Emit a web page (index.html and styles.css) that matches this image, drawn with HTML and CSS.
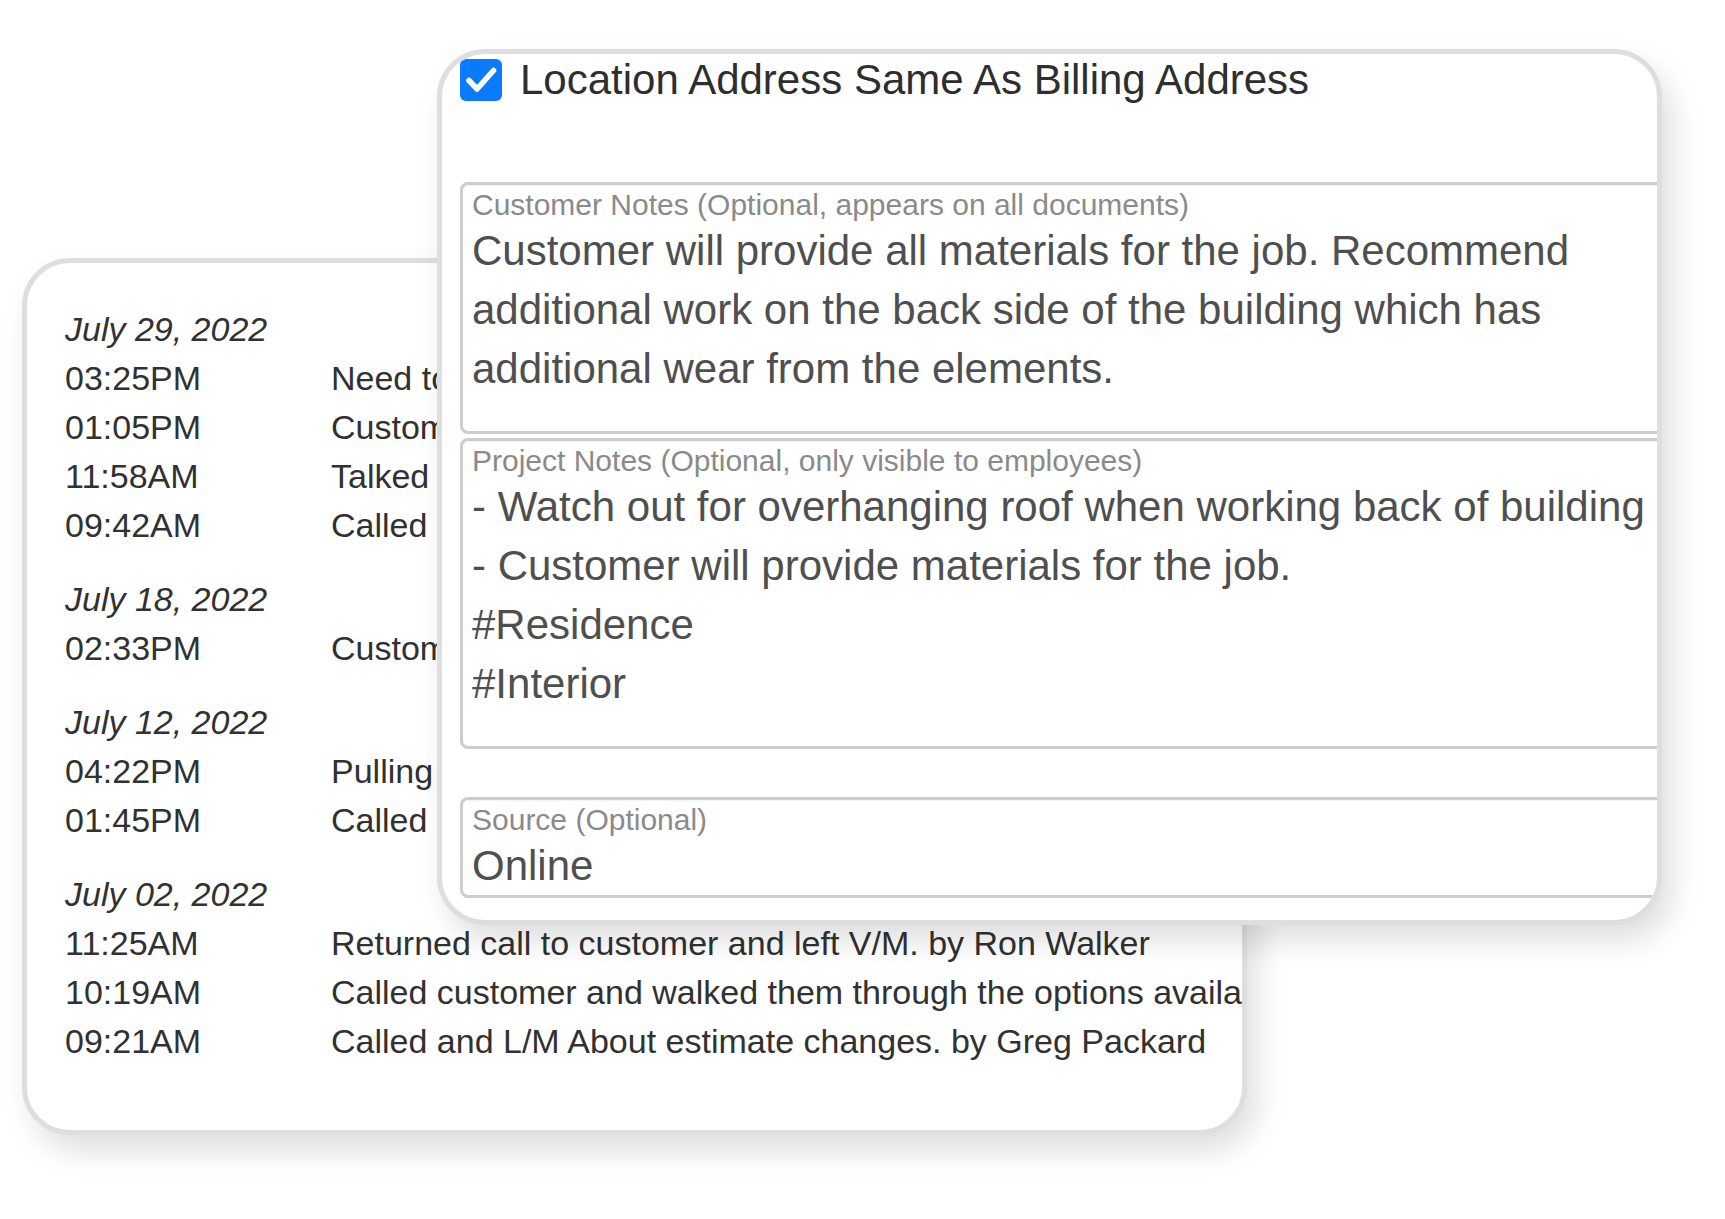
FILE: index.html
```html
<!DOCTYPE html>
<html lang="en">
<head>
<meta charset="utf-8">
<title>Customer Notes</title>
<link rel="stylesheet" href="styles.css">
</head>
<body>
<div class="stage">
  <section class="card log">
    <div class="group">
      <div class="date">July 29, 2022</div>
      <div class="row"><span class="time">03:25PM</span><span class="desc">Need to schedule a follow up visit with the customer. by Ron Walker</span></div>
      <div class="row"><span class="time">01:05PM</span><span class="desc">Customer asked for an updated estimate. by Greg Packard</span></div>
      <div class="row"><span class="time">11:58AM</span><span class="desc">Talked with customer about the start date. by Ron Walker</span></div>
      <div class="row"><span class="time">09:42AM</span><span class="desc">Called customer and left V/M. by Greg Packard</span></div>
    </div>
    <div class="group">
      <div class="date">July 18, 2022</div>
      <div class="row"><span class="time">02:33PM</span><span class="desc">Customer approved the color selections. by Ron Walker</span></div>
    </div>
    <div class="group">
      <div class="date">July 12, 2022</div>
      <div class="row"><span class="time">04:22PM</span><span class="desc">Pulling permits for the job. by Greg Packard</span></div>
      <div class="row"><span class="time">01:45PM</span><span class="desc">Called customer to confirm measurements. by Ron Walker</span></div>
    </div>
    <div class="group">
      <div class="date">July 02, 2022</div>
      <div class="row"><span class="time">11:25AM</span><span class="desc">Returned call to customer and left V/M. by Ron Walker</span></div>
      <div class="row"><span class="time">10:19AM</span><span class="desc">Called customer and walked them through the options available. by Greg Packard</span></div>
      <div class="row"><span class="time">09:21AM</span><span class="desc">Called and L/M About estimate changes. by Greg Packard</span></div>
    </div>
  </section>

  <section class="card form">
    <label class="check-row">
      <span class="checkbox">
        <svg viewBox="0 0 42 42" width="42" height="42" aria-hidden="true">
          <path d="M9 21.5 L17 30 L33.5 11.5" fill="none" stroke="#ffffff" stroke-width="5.6" stroke-linecap="round" stroke-linejoin="round"/>
        </svg>
      </span>
      <span class="check-label">Location Address Same As Billing Address</span>
    </label>

    <div class="field customer">
      <div class="field-label">Customer Notes (Optional, appears on all documents)</div>
      <div class="field-value">
        <div class="line">Customer will provide all materials for the job. Recommend</div>
        <div class="line">additional work on the back side of the building which has</div>
        <div class="line">additional wear from the elements.</div>
      </div>
    </div>

    <div class="field project">
      <div class="field-label">Project Notes (Optional, only visible to employees)</div>
      <div class="field-value">
        <div class="line">- Watch out for overhanging roof when working back of building</div>
        <div class="line">- Customer will provide materials for the job.</div>
        <div class="line">#Residence</div>
        <div class="line">#Interior</div>
      </div>
    </div>

    <div class="field source">
      <div class="field-label">Source (Optional)</div>
      <div class="field-value">
        <div class="line">Online</div>
      </div>
    </div>
  </section>
</div>
</body>
</html>
```

FILE: styles.css
```css
* {
  box-sizing: border-box;
}

html, body {
  margin: 0;
  padding: 0;
  background: #ffffff;
}

body {
  font-family: "Liberation Sans", Arial, Helvetica, sans-serif;
  width: 1725px;
  height: 1219px;
  overflow: hidden;
}

.stage {
  display: grid;
  grid-template-columns: 1fr;
  grid-template-rows: auto;
}

.card {
  grid-area: 1 / 1;
  width: 1225px;
  background: #ffffff;
  border: 5px solid #dedede;
  border-radius: 48px;
  overflow: hidden;
  box-shadow: 10px 16px 30px rgba(0, 0, 0, 0.13);
}

/* ---------- activity log card (behind) ---------- */
.log {
  margin: 258px 0 0 22px;
  height: 877px;
  padding: 42px 0 0 38px;
  z-index: 1;
  color: #313131;
  font-size: 34px;
  line-height: 49px;
}

.group + .group {
  margin-top: 25px;
}

.date {
  font-style: italic;
}

.row {
  display: flex;
  white-space: nowrap;
}

.time {
  flex: 0 0 266px;
}

.desc {
  flex: 0 0 auto;
}

/* ---------- form card (front) ---------- */
.form {
  margin: 49px 0 0 437px;
  height: 876px;
  padding: 5px 0 0 18px;
  z-index: 2;
}

.check-row {
  display: flex;
  align-items: flex-start;
  gap: 18px;
  height: 42px;
}

.checkbox {
  flex: 0 0 42px;
  width: 42px;
  height: 42px;
  border-radius: 6px;
  background: #0a7bff;
  display: block;
}

.checkbox svg {
  display: block;
}

.check-label {
  font-size: 42px;
  line-height: 42px;
  color: #2e2e2e;
  white-space: nowrap;
}

.field {
  margin-right: -60px;
  border: 3px solid #cdcdcd;
  border-radius: 8px;
  padding: 4px 0 33px 9px;
  box-shadow: inset 0 1px 2px rgba(0, 0, 0, 0.06);
  white-space: nowrap;
}

.customer {
  margin-top: 81px;
}

.project {
  margin-top: 4px;
}

.source {
  margin-top: 48px;
  padding-bottom: 0;
}

.field-label {
  font-size: 30px;
  line-height: 32px;
  color: #8a8a8a;
}

.field-value {
  font-size: 42px;
  line-height: 59px;
  color: #4f4f4f;
}
```
